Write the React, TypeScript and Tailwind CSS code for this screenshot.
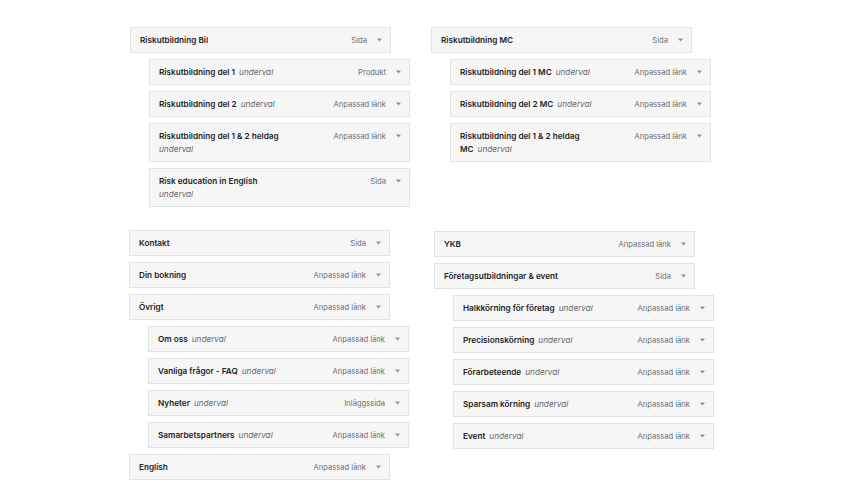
import React from "react";

type Item = {
  title: string;
  type: string;
  sub?: boolean;
  second?: string; // text that wraps onto the second line
  children?: Item[];
};

const Arrow = () => (
  <svg width="5" height="4" viewBox="0 0 5 4" className="shrink-0">
    <path d="M0 0.5h5L2.5 3.5z" fill="#8c8f94" />
  </svg>
);

function MenuItem({ item, child }: { item: Item; child?: boolean }) {
  const sub = item.sub ? (
    <em className="ml-[4px] font-normal italic text-[#646970]">underval</em>
  ) : null;
  return (
    <div
      className={`flex w-[261px] items-start justify-between border border-[#e3e3e4] bg-[#f6f6f6] py-[5.5px] pl-[9px] pr-[8px] leading-[13px] ${
        child ? "ml-[19px]" : ""
      }`}
    >
      <div className="whitespace-nowrap text-[8.2px] font-semibold text-[#1d2327]">
        {item.second !== undefined ? (
          <>
            <div>{item.title}</div>
            <div>
              {item.second}
              {item.second ? sub : <em className="font-normal italic text-[#646970]">underval</em>}
            </div>
          </>
        ) : (
          <>
            {item.title}
            {sub}
          </>
        )}
      </div>
      <div className="flex h-[13px] items-center gap-[10px]">
        <span className="whitespace-nowrap text-[7.6px] text-[#6b6f74]">{item.type}</span>
        <Arrow />
      </div>
    </div>
  );
}

function Group({ items, className = "" }: { items: Item[]; className?: string }) {
  return (
    <div className={`flex flex-col gap-[6px] ${className}`}>
      {items.map((it) => (
        <React.Fragment key={it.title}>
          <MenuItem item={it} />
          {it.children?.map((c) => (
            <MenuItem key={c.title} item={c} child />
          ))}
        </React.Fragment>
      ))}
    </div>
  );
}

const bil: Item[] = [
  {
    title: "Riskutbildning Bil",
    type: "Sida",
    children: [
      { title: "Riskutbildning del 1", type: "Produkt", sub: true },
      { title: "Riskutbildning del 2", type: "Anpassad länk", sub: true },
      { title: "Riskutbildning del 1 & 2 heldag", type: "Anpassad länk", sub: true, second: "" },
      { title: "Risk education in English", type: "Sida", sub: true, second: "" },
    ],
  },
];

const mc: Item[] = [
  {
    title: "Riskutbildning MC",
    type: "Sida",
    children: [
      { title: "Riskutbildning del 1 MC", type: "Anpassad länk", sub: true },
      { title: "Riskutbildning del 2 MC", type: "Anpassad länk", sub: true },
      { title: "Riskutbildning del 1 & 2 heldag", type: "Anpassad länk", sub: true, second: "MC" },
    ],
  },
];

const misc: Item[] = [
  { title: "Kontakt", type: "Sida" },
  { title: "Din bokning", type: "Anpassad länk" },
  {
    title: "Övrigt",
    type: "Anpassad länk",
    children: [
      { title: "Om oss", type: "Anpassad länk", sub: true },
      { title: "Vanliga frågor - FAQ", type: "Anpassad länk", sub: true },
      { title: "Nyheter", type: "Inläggssida", sub: true },
      { title: "Samarbetspartners", type: "Anpassad länk", sub: true },
    ],
  },
  { title: "English", type: "Anpassad länk" },
];

const company: Item[] = [
  { title: "YKB", type: "Anpassad länk" },
  {
    title: "Företagsutbildningar & event",
    type: "Sida",
    children: [
      { title: "Halkkörning för företag", type: "Anpassad länk", sub: true },
      { title: "Precisionskörning", type: "Anpassad länk", sub: true },
      { title: "Förarbeteende", type: "Anpassad länk", sub: true },
      { title: "Sparsam körning", type: "Anpassad länk", sub: true },
      { title: "Event", type: "Anpassad länk", sub: true },
    ],
  },
];

export default function App() {
  return (
    <div
      className="h-[500px] w-[847px] overflow-hidden bg-white pl-[129px] pt-[27px]"
      style={{ fontFamily: "Inter, 'Noto Sans', sans-serif" }}
    >
      <div className="grid grid-cols-[302px_auto] gap-y-[23px]">
        <Group items={bil} className="ml-[1px]" />
        <Group items={mc} />
        <Group items={misc} />
        <Group items={company} className="ml-[3px] mt-[1px]" />
      </div>
    </div>
  );
}
